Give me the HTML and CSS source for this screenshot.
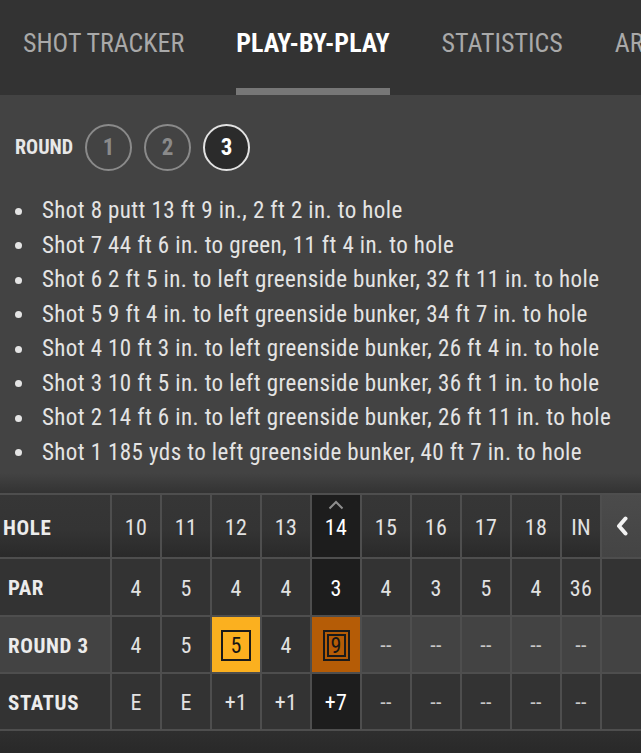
FILE: index.html
```html
<!DOCTYPE html>
<html lang="en">
<head>
<meta charset="utf-8">
<title>Play-by-play</title>
<link rel="stylesheet" href="styles.css">
</head>
<body>
<div class="app">
  <nav class="tabs">
    <div class="tab">SHOT TRACKER</div>
    <div class="tab active">PLAY-BY-PLAY</div>
    <div class="tab">STATISTICS</div>
    <div class="tab">ARCHIVE</div>
  </nav>
  <section class="pbp">
    <div class="round-select">
      <span class="round-label">ROUND</span>
      <span class="round-btn">1</span>
      <span class="round-btn">2</span>
      <span class="round-btn active">3</span>
    </div>
    <ul class="shots">
      <li class="shot">Shot 8 putt 13 ft 9 in., 2 ft 2 in. to hole</li>
      <li class="shot">Shot 7 44 ft 6 in. to green, 11 ft 4 in. to hole</li>
      <li class="shot">Shot 6 2 ft 5 in. to left greenside bunker, 32 ft 11 in. to hole</li>
      <li class="shot">Shot 5 9 ft 4 in. to left greenside bunker, 34 ft 7 in. to hole</li>
      <li class="shot">Shot 4 10 ft 3 in. to left greenside bunker, 26 ft 4 in. to hole</li>
      <li class="shot">Shot 3 10 ft 5 in. to left greenside bunker, 36 ft 1 in. to hole</li>
      <li class="shot">Shot 2 14 ft 6 in. to left greenside bunker, 26 ft 11 in. to hole</li>
      <li class="shot">Shot 1 185 yds to left greenside bunker, 40 ft 7 in. to hole</li>
    </ul>
  </section>
  <section class="scorecard">
    <div class="card">
      <div class="cell hd label hole-label">HOLE</div>
      <div class="cell hd">10</div>
      <div class="cell hd">11</div>
      <div class="cell hd">12</div>
      <div class="cell hd">13</div>
      <div class="cell hd cur">
        <svg class="caret" width="16" height="10" viewBox="0 0 16 10"><polyline points="1.5,8.5 8,2 14.5,8.5" fill="none" stroke="#8e8e8e" stroke-width="2"/></svg>
        14
      </div>
      <div class="cell hd">15</div>
      <div class="cell hd">16</div>
      <div class="cell hd">17</div>
      <div class="cell hd">18</div>
      <div class="cell hd">IN</div>
      <div class="cell hd nav-btn">
        <svg width="12" height="20" viewBox="0 0 12 20"><polyline points="9.5,2.5 3,10 9.5,17.5" fill="none" stroke="#f2f2f2" stroke-width="4" stroke-linejoin="round" stroke-linecap="round"/></svg>
      </div>

      <div class="cell label">PAR</div>
      <div class="cell">4</div>
      <div class="cell">5</div>
      <div class="cell">4</div>
      <div class="cell">4</div>
      <div class="cell cur">3</div>
      <div class="cell">4</div>
      <div class="cell">3</div>
      <div class="cell">5</div>
      <div class="cell">4</div>
      <div class="cell">36</div>
      <div class="cell"></div>

      <div class="cell label light">ROUND 3</div>
      <div class="cell">4</div>
      <div class="cell">5</div>
      <div class="cell bogey"><span class="sq">5</span></div>
      <div class="cell">4</div>
      <div class="cell dbl"><span class="sq2">9</span></div>
      <div class="cell light dash">--</div>
      <div class="cell light dash">--</div>
      <div class="cell light dash">--</div>
      <div class="cell light dash">--</div>
      <div class="cell light dash">--</div>
      <div class="cell light"></div>

      <div class="cell label">STATUS</div>
      <div class="cell">E</div>
      <div class="cell">E</div>
      <div class="cell">+1</div>
      <div class="cell">+1</div>
      <div class="cell cur">+7</div>
      <div class="cell dash">--</div>
      <div class="cell dash">--</div>
      <div class="cell dash">--</div>
      <div class="cell dash">--</div>
      <div class="cell dash">--</div>
      <div class="cell"></div>
    </div>
  </section>
</div>
</body>
</html>
```
FILE: styles.css
```css
* { box-sizing: border-box; margin: 0; padding: 0; }
html, body { background: #2a2a2a; }
body {
  width: 641px;
  height: 753px;
  overflow: hidden;
  font-family: "Roboto Condensed", Roboto, "Liberation Sans", sans-serif;
  font-stretch: condensed;
  color: #e4e4e4;
}

.tabs {
  display: flex;
  gap: 52px;
  height: 95px;
  padding-left: 23px;
  background: #333333;
  white-space: nowrap;
  overflow: hidden;
}
.tab {
  flex: none;
  height: 95px;
  padding-top: 28px;
  font-size: 26px;
  line-height: 30px;
  color: #a9a9a9;
}
.tab.active {
  color: #ffffff;
  font-weight: 700;
  border-bottom: 7px solid #777777;
}

.pbp {
  background: #434343;
  padding: 28px 0 3px;
}
.round-select {
  display: flex;
  align-items: center;
  gap: 12px;
  height: 48px;
  padding-left: 15px;
}
.round-label {
  font-size: 20px;
  font-weight: 700;
  color: #e8e8e8;
}
.round-btn {
  display: flex;
  align-items: center;
  justify-content: center;
  width: 47px;
  height: 47px;
  border-radius: 50%;
  border: 2px solid #8a8a8a;
  color: #8a8a8a;
  font-size: 23px;
  font-weight: 700;
}
.round-btn.active {
  border-color: #e2e2e2;
  background: #2b2b2b;
  color: #ffffff;
}

.shots {
  list-style: none;
  margin-top: 23px;
}
.shot {
  display: flex;
  align-items: center;
  font-size: 23px;
  line-height: 34.5px;
  letter-spacing: 0.4px;
  color: #e4e4e4;
  white-space: nowrap;
}
.shot::before {
  content: "";
  flex: none;
  width: 7px;
  height: 7px;
  border-radius: 50%;
  background: #e4e4e4;
  margin: 0 20px 0 15px;
}

.scorecard {
  height: 280px;
  padding-top: 20px;
  background: linear-gradient(#434343 0, #333333 20px, #333333 240px, #292929 100%);
}
.card {
  display: grid;
  grid-template-columns: 110px repeat(9, 48px) 38px 1fr;
  grid-template-rows: 62px 56px 55px 55px;
  gap: 2px;
  padding: 2px 0;
  background: #4e4e4e;
}
.cell {
  position: relative;
  display: flex;
  align-items: center;
  justify-content: center;
  padding-top: 2px;
  background: #333333;
  font-size: 22px;
  letter-spacing: 0.3px;
  color: #e2e2e2;
}
.cell.hd {
  padding-top: 3px;
  background: linear-gradient(#363636 0, #343434 55%, #2a2a2a 100%);
}
.cell.label {
  justify-content: flex-start;
  padding-left: 8px;
  font-size: 21px;
  font-weight: 700;
  letter-spacing: 0.6px;
  color: #ececec;
}
.cell.hole-label { padding-left: 3px; }
.cell.light { background: #434343; }
.cell.cur { background: #1d1d1d; color: #ffffff; }
.cell.hd.cur { background: #1d1d1d; }
.cell.dash { color: #c8c8c8; }
.cell.nav-btn {
  padding-top: 0;
  background: linear-gradient(#4b4b4b, #444444);
}
.caret {
  position: absolute;
  top: 5px;
  left: 16px;
}
.cell.bogey { background: #fbb01f; color: #151515; }
.cell.dbl { background: #b55c06; color: #151515; }
.sq {
  display: flex;
  align-items: center;
  justify-content: center;
  width: 30px;
  height: 31px;
  border: 2px solid #1a1a1a;
}
.sq2 {
  display: flex;
  align-items: center;
  justify-content: center;
  width: 27px;
  height: 31px;
  border: 2px solid #1a1a1a;
  box-shadow: inset 0 0 0 2px #b55c06, inset 0 0 0 4px #1a1a1a;
}
```
